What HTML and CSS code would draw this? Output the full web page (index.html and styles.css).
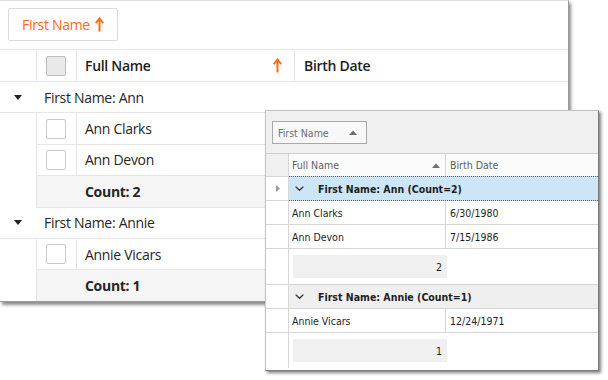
FILE: index.html
```html
<!DOCTYPE html>
<html>
<head>
<meta charset="utf-8">
<link rel="stylesheet" href="styles.css">
</head>
<body>
<div class="stage">
  <section class="ga">
    <div class="ga-toolbar">
      <button class="ga-chip">First Name
        <svg class="up" width="9" height="15" viewBox="0 0 9 15"><path d="M4.5 14.5V2" stroke="#ff6a13" stroke-width="2" fill="none"/><path d="M0.8 6.2 L4.5 1.6 L8.2 6.2" stroke="#ff6a13" stroke-width="1.9" fill="none"/></svg>
      </button>
    </div>
    <div class="ga-head">
      <div class="ga-ind"></div>
      <div class="ga-chk"><span class="box box-head"></span></div>
      <div class="ga-hname">Full Name
        <svg class="up" width="9" height="15" viewBox="0 0 9 15"><path d="M4.5 14.5V2" stroke="#ff6a13" stroke-width="2" fill="none"/><path d="M0.8 6.2 L4.5 1.6 L8.2 6.2" stroke="#ff6a13" stroke-width="1.9" fill="none"/></svg>
      </div>
      <div class="ga-hdate">Birth Date</div>
    </div>

    <div class="ga-group"><span class="caret"></span>First Name: Ann</div>
    <div class="ga-row">
      <div class="ga-gap"></div>
      <div class="ga-body"><div class="ga-chk"><span class="box"></span></div><div class="ga-name">Ann Clarks</div></div>
    </div>
    <div class="ga-row">
      <div class="ga-gap"></div>
      <div class="ga-body"><div class="ga-chk"><span class="box"></span></div><div class="ga-name">Ann Devon</div></div>
    </div>
    <div class="ga-row ga-sum">
      <div class="ga-gap"></div>
      <div class="ga-body ga-count">Count: 2</div>
    </div>

    <div class="ga-group"><span class="caret"></span>First Name: Annie</div>
    <div class="ga-row">
      <div class="ga-gap"></div>
      <div class="ga-body"><div class="ga-chk"><span class="box"></span></div><div class="ga-name">Annie Vicars</div></div>
    </div>
    <div class="ga-row ga-sum ga-last">
      <div class="ga-gap"></div>
      <div class="ga-body ga-count">Count: 1</div>
    </div>
  </section>

  <section class="gb">
    <div class="gb-toolbar">
      <div class="gb-chip">First Name
        <svg width="8" height="5" viewBox="0 0 8 5"><polygon points="0,5 4,0.5 8,5" fill="#6e6e6e"/></svg>
      </div>
    </div>
    <div class="gb-head">
      <div class="gb-ind"></div>
      <div class="gb-hname">Full Name
        <svg width="8" height="5" viewBox="0 0 8 5"><polygon points="0,5 4,0.5 8,5" fill="#6e6e6e"/></svg>
      </div>
      <div class="gb-hdate">Birth Date</div>
    </div>

    <div class="gb-row">
      <div class="gb-ind"><svg width="4" height="7" viewBox="0 0 4 7"><polygon points="0,0 4,3.5 0,7" fill="#9a9a9a"/></svg></div>
      <div class="gb-group gb-focus">
        <svg class="chev" width="9" height="5" viewBox="0 0 9 5"><path d="M0.6 0.6 L4.5 4.3 L8.4 0.6" stroke="#2a2a2a" stroke-width="1.3" fill="none"/></svg>
        First Name: Ann (Count=2)
      </div>
    </div>
    <div class="gb-row">
      <div class="gb-ind"></div>
      <div class="gb-name">Ann Clarks</div>
      <div class="gb-date">6/30/1980</div>
    </div>
    <div class="gb-row">
      <div class="gb-ind"></div>
      <div class="gb-name">Ann Devon</div>
      <div class="gb-date">7/15/1986</div>
    </div>
    <div class="gb-row gb-foot">
      <div class="gb-ind"></div>
      <div class="gb-footcell"><span class="gb-sum">2</span></div>
    </div>

    <div class="gb-row">
      <div class="gb-ind"></div>
      <div class="gb-group">
        <svg class="chev" width="9" height="5" viewBox="0 0 9 5"><path d="M0.6 0.6 L4.5 4.3 L8.4 0.6" stroke="#2a2a2a" stroke-width="1.3" fill="none"/></svg>
        First Name: Annie (Count=1)
      </div>
    </div>
    <div class="gb-row">
      <div class="gb-ind"></div>
      <div class="gb-name">Annie Vicars</div>
      <div class="gb-date">12/24/1971</div>
    </div>
    <div class="gb-row gb-foot gb-lastfoot">
      <div class="gb-ind"></div>
      <div class="gb-footcell"><span class="gb-sum">1</span></div>
    </div>
  </section>
</div>
</body>
</html>
```

FILE: styles.css
```css
* { box-sizing: border-box; margin: 0; padding: 0; }
html, body { margin: 0; background: #ffffff; }
body { width: 608px; height: 380px; overflow: hidden; }
.stage { position: relative; width: 608px; height: 380px; }

/* ---------- left grid ---------- */
.ga {
  width: 569px;
  height: 302px;
  background: #fff;
  border-top: 1px solid #e2e2e2;
  border-right: 1px solid #9a9a9a;
  border-bottom: 1px solid #9a9a9a;
  box-shadow: 2px 3px 3px rgba(0,0,0,0.45);
  font-family: "Open Sans", "Noto Sans", sans-serif;
  font-size: 14px;
  letter-spacing: -0.3px;
  color: #262626;
  display: flex;
  flex-direction: column;
}
.ga-toolbar {
  height: 49px;
  border-bottom: 1px solid #e6e6e6;
  padding: 7px 0 0 8px;
}
.ga-chip {
  height: 33px;
  width: 110px;
  border: 1px solid #dadada;
  border-radius: 2px;
  background: #fff;
  color: #ff6a13;
  font-family: inherit;
  font-size: 14px;
  letter-spacing: -0.3px;
  display: flex;
  align-items: center;
  gap: 5px;
  padding-left: 13px;
}
.up { display: block; }
.ga-head {
  height: 32px;
  border-bottom: 1px solid #e6e6e6;
  display: flex;
  flex: none;
}
.ga-ind { width: 37px; border-right: 1px solid #e6e6e6; }
.ga-chk {
  width: 40px;
  border-right: 1px solid #e6e6e6;
  display: flex;
  align-items: center;
  padding-left: 9px;
  flex: none;
}
.box {
  width: 20px; height: 20px;
  border: 1px solid #c9c9c9;
  border-radius: 2px;
  background: #fff;
}
.box-head { background: #e9e9e9; border-color: #bdbdbd; }
.ga-hname {
  width: 218px;
  border-right: 1px solid #e6e6e6;
  display: flex;
  align-items: center;
  justify-content: space-between;
  padding: 0 12px 0 8px;
  font-weight: 600;
  color: #1e1e1e;
}
.ga-hdate {
  flex: 1;
  display: flex;
  align-items: center;
  padding-left: 9px;
  font-weight: 600;
  color: #1e1e1e;
}
.ga-group {
  height: 31.4px;
  border-bottom: 1px solid #e6e6e6;
  display: flex;
  align-items: center;
  padding-left: 14px;
  flex: none;
}
.caret {
  width: 0; height: 0;
  border-left: 4.5px solid transparent;
  border-right: 4.5px solid transparent;
  border-top: 5px solid #222;
  margin-right: 22px;
}
.ga-row { height: 31.4px; display: flex; flex: none; }
.ga-gap { width: 36px; flex: none; }
.ga-body {
  flex: 1;
  display: flex;
  border-left: 1px solid #e6e6e6;
  border-bottom: 1px solid #e6e6e6;
}
.ga-name { display: flex; align-items: center; padding-left: 8px; }
.ga-sum .ga-body { background: #f5f5f5; }
.ga-count { align-items: center; padding-left: 48px; font-weight: 700; }
.ga-last .ga-body { border-bottom: none; }
.ga-last { height: 30.6px; }

/* ---------- right grid ---------- */
.gb {
  position: absolute;
  left: 265px;
  top: 110px;
  width: 334px;
  height: 261px;
  background: #fff;
  border: 1px solid #c4c4c4;
  border-right-color: #7a7a7a;
  border-bottom-color: #7a7a7a;
  box-shadow: 2px 2px 3px rgba(0,0,0,0.5);
  font-family: "DejaVu Sans Condensed", "DejaVu Sans", sans-serif;
  font-size: 10.5px;
  color: #1e1e1e;
  display: flex;
  flex-direction: column;
}
.gb-toolbar {
  height: 43px;
  background: #f0f0f0;
  border-bottom: 1px solid #cfcfcf;
  padding: 10px 0 0 6px;
  flex: none;
}
.gb-chip {
  width: 95px;
  height: 23px;
  border: 1px solid #a9a9a9;
  background: #f8f8f8;
  color: #6e6e6e;
  display: flex;
  align-items: center;
  justify-content: space-between;
  padding: 0 9px 0 5px;
}
.gb-chip svg, .gb-hname svg { display: block; }
.gb-head {
  height: 23px;
  display: flex;
  border-bottom: 1px solid #d6d6d6;
  background: #fbfbfb;
  color: #5e5e5e;
  flex: none;
}
.gb-ind {
  width: 23px;
  flex: none;
  border-right: 1px solid #d6d6d6;
  display: flex;
  align-items: center;
  padding-left: 10px;
}
.gb-head .gb-ind { background: #f0f0f0; }
.gb-hname {
  width: 157px;
  border-right: 1px solid #d6d6d6;
  display: flex;
  align-items: center;
  justify-content: space-between;
  padding: 0 5px 0 3px;
}
.gb-hdate { flex: 1; display: flex; align-items: center; padding-left: 4px; }
.gb-row {
  height: 24px;
  display: flex;
  border-bottom: 1px solid #d6d6d6;
  flex: none;
}
.gb-group {
  flex: 1;
  display: flex;
  align-items: center;
  padding-left: 6px;
  font-weight: 700;
  background: #efefef;
}
.gb-focus {
  background: #cde6f7;
  border-top: 1px dotted #555;
  border-bottom: 1px dotted #555;
  margin-bottom: -1px;
  margin-top: -1px;
  height: 25px;
}
.chev { margin-right: 14px; display: block; }
.gb-name {
  width: 157px;
  border-right: 1px solid #d6d6d6;
  display: flex;
  align-items: center;
  padding-left: 3px;
}
.gb-date { flex: 1; display: flex; align-items: center; padding-left: 4px; }
.gb-foot { height: 36px; }
.gb-footcell { flex: 1; display: flex; align-items: center; padding-left: 4px; }
.gb-sum {
  width: 154px;
  height: 23px;
  background: #f0f0f0;
  display: flex;
  align-items: center;
  justify-content: flex-end;
  padding-right: 5px;
}
.gb-lastfoot { border-bottom: none; height: 35px; }
```
